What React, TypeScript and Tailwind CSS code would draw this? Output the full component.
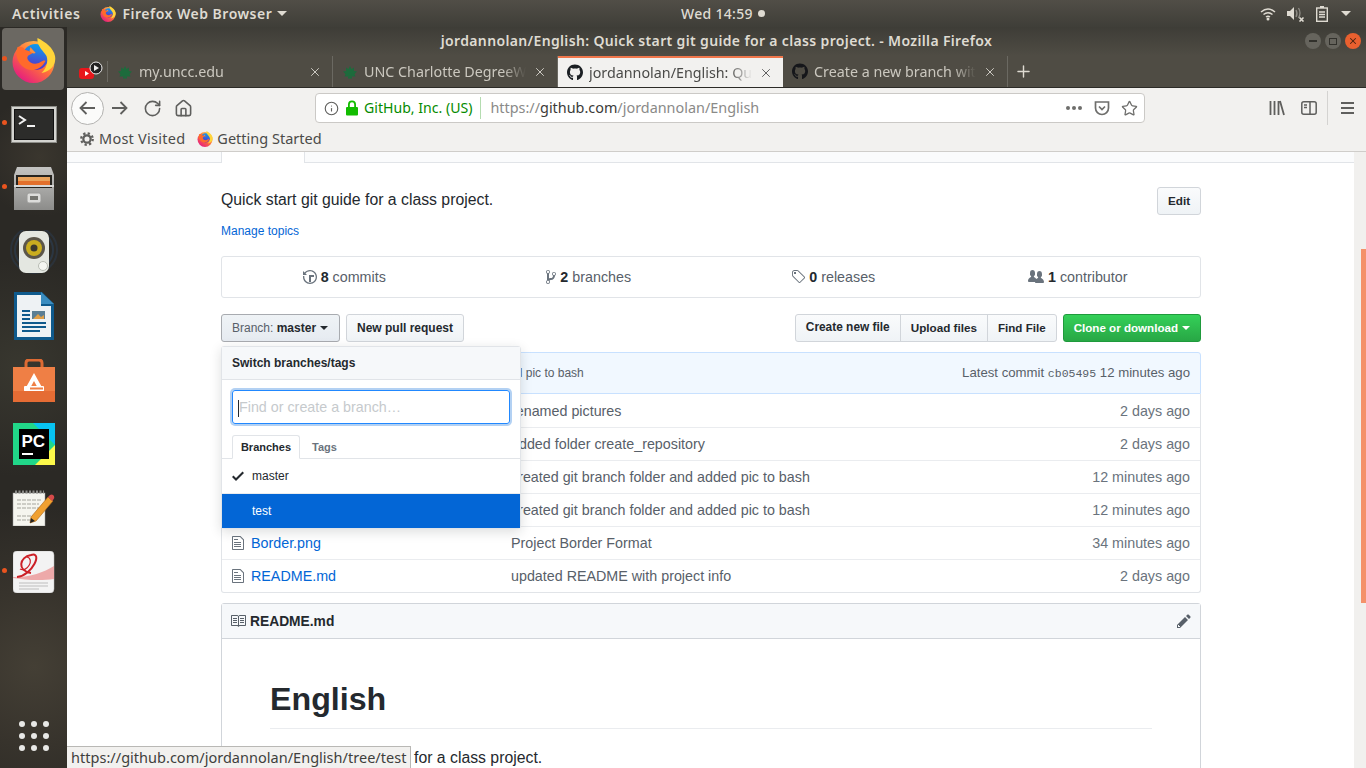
import { Home, Info, RotateCw, Star, Plus, X } from "lucide-react";
import { FaGithub } from "react-icons/fa";

const uiFont = "font-['Noto_Sans',sans-serif]";

const Octicon = ({ d, w, className }: { d: string; w: number; className?: string }) => (
  <svg viewBox={`0 0 ${w} 16`} width={w} height={16} fill="currentColor" className={className}>
    <path fillRule="evenodd" d={d} />
  </svg>
);

const icons = {
  history:
    "M8 13H6V6h5v2H8v5zM7 1C4.81 1 2.87 2.02 1.59 3.59L0 2v4h4L2.5 4.5C3.55 3.17 5.17 2.3 7 2.3c3.14 0 5.7 2.56 5.7 5.7s-2.56 5.7-5.7 5.7A5.71 5.71 0 0 1 1.3 8c0-.34.03-.67.09-1H.08C.03 7.33 0 7.66 0 8c0 3.86 3.14 7 7 7s7-3.14 7-7-3.14-7-7-7z",
  branch:
    "M10 5c0-1.11-.89-2-2-2a1.993 1.993 0 0 0-1 3.72v.3c-.02.52-.23.98-.63 1.38-.4.4-.86.61-1.38.63-.83.02-1.48.16-2 .45V4.72a1.993 1.993 0 0 0-1-3.72C.88 1 0 1.89 0 3a2 2 0 0 0 1 1.72v6.56c-.59.35-1 .99-1 1.72 0 1.11.89 2 2 2 1.11 0 2-.89 2-2 0-.53-.2-1-.53-1.36.09-.06.48-.41.59-.47.25-.11.56-.17.94-.17 1.05-.05 1.95-.45 2.75-1.25S8.95 7.77 9 6.73h-.02C9.59 6.37 10 5.73 10 5zM2 1.8c.66 0 1.2.55 1.2 1.2 0 .65-.55 1.2-1.2 1.2C1.35 4.2.8 3.65.8 3c0-.65.55-1.2 1.2-1.2zm0 12.41c-.66 0-1.2-.55-1.2-1.2 0-.65.55-1.2 1.2-1.2.65 0 1.2.55 1.2 1.2 0 .65-.55 1.2-1.2 1.2zm6-8c-.66 0-1.2-.55-1.2-1.2 0-.65.55-1.2 1.2-1.2.65 0 1.2.55 1.2 1.2 0 .65-.55 1.2-1.2 1.2z",
  tag: "M7.73 1.73C7.26 1.26 6.62 1 5.96 1H3.5C2.13 1 1 2.13 1 3.5v2.47c0 .66.27 1.3.73 1.77l6.06 6.06c.39.39 1.02.39 1.41 0l4.59-4.59a.996.996 0 0 0 0-1.41L7.73 1.73zM2.38 7.09c-.31-.3-.47-.7-.47-1.13V3.5c0-.88.72-1.59 1.59-1.59h2.47c.42 0 .83.16 1.13.47l6.14 6.13-4.73 4.73-6.13-6.15zM3.01 3h2v2H3V3h.01z",
  people:
    "M16 12.999c0 .439-.45 1-1 1H7.995c-.539 0-.994-.447-.995-.999H1c-.54 0-1-.561-1-1 0-2.634 3-4 3-4s.229-.409 0-1c-.841-.621-1.058-.59-1-3 .058-2.419 1.367-3 2.5-3s2.442.58 2.5 3c.058 2.41-.159 2.379-1 3-.229.59 0 1 0 1s1.549.711 2.42 2.088C9.196 9.369 10 8.999 10 8.999s.229-.409 0-1c-.841-.62-1.058-.59-1-3 .058-2.419 1.367-3 2.5-3s2.437.581 2.495 3c.059 2.41-.158 2.38-1 3-.229.59 0 1 0 1s3.005 1.366 3.005 4z",
  file: "M6 5H2V4h4v1zM2 8h7V7H2v1zm0 2h7V9H2v1zm0 2h7v-1H2v1zm10-7.5V14c0 .55-.45 1-1 1H1c-.55 0-1-.45-1-1V2c0-.55.45-1 1-1h7.5L12 4.5zM11 5L8 2H1v12h10V5z",
  book: "M3 5h4v1H3V5zm0 3h4V7H3v1zm0 2h4V9H3v1zm11-5h-4v1h4V5zm0 2h-4v1h4V7zm0 2h-4v1h4V9zm2-6v9c0 .55-.45 1-1 1H9.5l-1 1-1-1H2c-.55 0-1-.45-1-1V3c0-.55.45-1 1-1h5.5l1 1 1-1H15c.55 0 1 .45 1 1zm-8 .5L7.5 3H2v9h6V3.5zm7-.5H9.5l-.5.5V12h6V3z",
  pencil:
    "M0 12v3h3l8-8-3-3-8 8zm3 2H1v-2h1v1h1v1zm10.3-9.3L12 6 9 3l1.3-1.3a.996.996 0 0 1 1.41 0l1.59 1.59c.39.39.39 1.02 0 1.41z",
  check: "M12 5l-8 8-4-4 1.5-1.5L4 10l6.5-6.5L12 5z",
};

const FirefoxLogo = ({ size }: { size: number }) => (
  <svg viewBox="0 0 44 45" width={size} height={size}>
    <defs>
      <linearGradient id="ffBody" x1="0.8" y1="0.1" x2="0.15" y2="0.95">
        <stop offset="0" stopColor="#ffbd4f" />
        <stop offset="0.45" stopColor="#ff7139" />
        <stop offset="1" stopColor="#e31587" />
      </linearGradient>
      <linearGradient id="ffGlobe" x1="0.6" y1="0" x2="0.4" y2="1">
        <stop offset="0" stopColor="#0a9ff0" />
        <stop offset="0.55" stopColor="#3a5fd8" />
        <stop offset="1" stopColor="#592acb" />
      </linearGradient>
    </defs>
    <circle cx="22" cy="24" r="21" fill="url(#ffBody)" />
    <circle cx="24" cy="19" r="13" fill="url(#ffGlobe)" />
    <path d="M26 0C25 8 32 13 35 18C37 24 35 30 30 35C40 33 45 26 43.5 18C42 10 34 4 26 0Z" fill="#ffd43a" />
    <path d="M6 9C9 8 12 9 14 12C16 13 20 13 21 15C19 17 15 17 16 21C18 26 25 27 29 24C31 23 33 22 34 23C30 31 22 34 15 31C7 27 3 18 6 9Z" fill="#ff6a2b" />
    <path d="M19 9C21 12 24 14 24 15C22 16 20 15 18 13Z" fill="#ff8f3a" />
  </svg>
);

const TerminalIcon = () => (
  <svg viewBox="0 0 46 37" width={46} height={37}>
    <rect x="0.5" y="0.5" width="45" height="36" fill="#d4d4d0" stroke="#8d8d88" />
    <rect x="3.5" y="3.5" width="39" height="30" fill="#2c2c2a" stroke="#111" />
    <path d="M8 10l6 4-6 4" fill="none" stroke="#f2f2f2" strokeWidth="2" />
    <rect x="16" y="19" width="8" height="2" fill="#f2f2f2" />
  </svg>
);

const FilesIcon = () => (
  <svg viewBox="0 0 42 43" width={42} height={43}>
    <defs>
      <linearGradient id="cab" x1="0" y1="0" x2="0" y2="1">
        <stop offset="0" stopColor="#c4c4c2" />
        <stop offset="1" stopColor="#8c8c8a" />
      </linearGradient>
    </defs>
    <path d="M4 0h34l3 8v35H1V8z" fill="url(#cab)" />
    <rect x="3" y="8" width="36" height="13" fill="#26241f" />
    <rect x="5" y="10" width="32" height="8" fill="#e9a35d" />
    <rect x="5" y="14" width="32" height="4" fill="#e2702c" />
    <rect x="1" y="18" width="40" height="2" fill="#d8d8d6" />
    <rect x="14" y="26" width="14" height="10" rx="2" fill="#dcdcda" stroke="#9a9a98" />
    <rect x="17" y="29" width="8" height="4" fill="#74746f" />
  </svg>
);

const SpeakerIcon = () => (
  <svg viewBox="0 0 48 44" width={48} height={44}>
    <circle cx="24" cy="20" r="23" fill="none" stroke="#2c4a6e" strokeWidth="2" opacity="0.3" />
    <circle cx="24" cy="20" r="19" fill="none" stroke="#2c4a6e" strokeWidth="2" opacity="0.4" />
    <rect x="9" y="1" width="30" height="42" rx="7" fill="#e4e7e1" />
    <circle cx="24" cy="18" r="11" fill="#5b564a" />
    <circle cx="24" cy="18" r="8" fill="#c9ad1f" />
    <circle cx="24" cy="18" r="3.5" fill="#3c3a2c" />
    <circle cx="33" cy="36" r="4.5" fill="#f4f6f2" stroke="#b8bcb4" />
  </svg>
);

const WriterIcon = () => (
  <svg viewBox="0 0 40 48" width={40} height={48}>
    <path d="M0 0h28l12 12v36H0z" fill="#0f5a8c" />
    <path d="M3 3h24v11h10v31H3z" fill="#eef2f4" />
    <path d="M27 0l13 12H27z" fill="#3b8dc0" />
    <rect x="18" y="19" width="13" height="8" fill="#5b7f94" />
    <path d="M19 27l5-5 3 3 3-2v4z" fill="#e0a048" />
    <path d="M8 18h8v2H8zM8 22h8v2H8zM8 26h8v2H8zM8 30h24v2H8zM8 34h24v2H8zM8 38h18v2H8z" fill="#0f5a8c" />
  </svg>
);

const BagIcon = () => (
  <svg viewBox="0 0 42 43" width={42} height={43}>
    <path d="M13 12V4q0-3 3-3h10q3 0 3 3v8" fill="none" stroke="#dd6a33" strokeWidth="3" />
    <path d="M0 8h42v35H0z" fill="#ef7f45" />
    <path d="M0 32h42v11H0z" fill="#e56c34" />
    <path d="M21 14l10 18h-4.5l-5.5-10-5.5 10H11z" fill="#fff" />
    <rect x="11" y="27" width="20" height="5" rx="1" fill="#fff" />
    <rect x="17" y="28.5" width="13" height="2" fill="#ef7f45" />
  </svg>
);

const PyCharmIcon = () => (
  <svg viewBox="0 0 42 42" width={42} height={42}>
    <rect width="42" height="42" fill="#21d789" />
    <path d="M20 0h22v22z" fill="#07c3f2" />
    <path d="M22 42l20-20v20z" fill="#fcf84a" />
    <rect x="6" y="6" width="30" height="30" fill="#000" />
    <rect x="9" y="30" width="11" height="2" fill="#fff" />
    <text x="8.5" y="24" fill="#fff" fontSize="17" fontWeight="700" fontFamily="Liberation Sans, sans-serif">PC</text>
  </svg>
);

const NotesIcon = () => (
  <svg viewBox="0 0 44 36" width={44} height={36}>
    <rect x="1" y="3" width="32" height="33" fill="#f5f5ef" stroke="#999" strokeWidth="0.5" />
    <path d="M3 2h29" stroke="#8b8b88" strokeWidth="3" strokeDasharray="2 1.5" />
    <path d="M5 10h24M5 14h22M5 18h24M5 26h18M5 30h14" stroke="#a5a59d" strokeWidth="1" strokeDasharray="4 1" />
    <path d="M19 27L36 7l5 4-17 20-6 2z" fill="#f0a030" stroke="#a9641a" strokeWidth="0.6" />
    <path d="M36 7l2-2q2-1 3 0l1 1q1 2-1 4l-1 1z" fill="#d64a4a" />
    <path d="M18 33l1-5 4 3z" fill="#222" />
  </svg>
);

const EvinceIcon = () => (
  <svg viewBox="0 0 42 42" width={42} height={42}>
    <rect width="41" height="42" rx="4" fill="#f3f3f3" stroke="#bbb" strokeWidth="0.5" />
    <path d="M0 26C14 27 30 22 41 15V28C28 30 12 29 0 27z" fill="#eda9a9" />
    <path d="M4 26C20 24 30 0 18 4C6 6 4 20 18 22" fill="none" stroke="#cc2027" strokeWidth="2" />
    <path d="M7 18C14 22 22 8 14 6" fill="none" stroke="#cc2027" strokeWidth="1.2" />
    <path d="M6 32h29M6 35h29M6 38h20" stroke="#bdbdbd" strokeWidth="1" />
  </svg>
);

const UnccIcon = () => (
  <svg viewBox="0 0 16 16" width={16} height={16} fill="#1d6b3c">
    <path d="M8 2l1.5 3L12 3.5 11.8 7 15 7.5 12.5 10l1 2.5H2.5l1-2.5L1 7.5 4.2 7 4 3.5 6.5 5z" />
    <rect x="6" y="12.5" width="4" height="2" />
  </svg>
);

const dockItems = [
  { key: "firefox", icon: <FirefoxLogo size={45} />, dot: true, active: true },
  { key: "terminal", icon: <TerminalIcon />, dot: true },
  { key: "files", icon: <FilesIcon />, dot: true },
  { key: "speaker", icon: <SpeakerIcon /> },
  { key: "writer", icon: <WriterIcon /> },
  { key: "bag", icon: <BagIcon /> },
  { key: "pycharm", icon: <PyCharmIcon /> },
  { key: "notes", icon: <NotesIcon /> },
  { key: "evince", icon: <EvinceIcon />, dot: true },
];

const Dock = () => (
  <div className="w-[67px] shrink-0 flex flex-col bg-[#2b2925] bg-[radial-gradient(circle_at_34px_640px,#443f35_0,#37332c_80px,transparent_160px),radial-gradient(circle_at_20px_340px,#38372f_0,transparent_110px),radial-gradient(circle_at_40px_130px,#3a362e_0,transparent_60px)] pt-px">
    {dockItems.map((item) => (
      <div key={item.key} className="relative h-16 flex items-center justify-center">
        {item.active && <div className="absolute left-[2px] right-[3px] top-0 h-[62px] rounded-[4px] bg-[#6b6862]" />}
        {item.dot && <div className="absolute left-[2px] top-[28px] w-[5px] h-[5px] rounded-full bg-[#e9541f]" />}
        <div className="relative flex">{item.icon}</div>
      </div>
    ))}
    <div className="mt-auto mb-[17px] mx-auto grid grid-cols-3 gap-x-[6px] gap-y-[6px]">
      {Array.from({ length: 9 }).map((_, i) => (
        <div key={i} className="w-[6px] h-[6px] rounded-full bg-[#e8e8e6]" />
      ))}
    </div>
  </div>
);

const TopBar = () => (
  <div className={`h-[27px] shrink-0 flex items-center relative bg-gradient-to-b from-[#514e47] to-[#3f3e38] text-[#dfdbd2] text-[14px] font-semibold ${uiFont}`}>
    <span className="ml-3 tracking-[0.6px]">Activities</span>
    <span className="ml-5 flex"><FirefoxLogo size={16} /></span>
    <span className="ml-[6px] tracking-[0.5px]">Firefox Web Browser</span>
    <span className="ml-[5px] w-0 h-0 border-x-[5px] border-x-transparent border-t-[5px] border-t-[#dfdbd2]" />
    <div className="absolute left-[681px] top-0 h-[27px] flex items-center gap-[5px] font-medium">
      <span className="tracking-[0.3px]">Wed 14:59</span>
      <span className="w-[7px] h-[7px] rounded-full bg-[#dfdbd2]" />
    </div>
    <div className="ml-auto flex items-center mr-[15px]">
      <svg viewBox="0 0 16 14" width={16} height={14} className="mr-[11px]" fill="none" stroke="#dfdbd2" strokeWidth="1.5">
        <path d="M1 5q7-6 14 0M3.5 7.5q4.5-3.5 9 0M6 10q2-1.5 4 0" />
        <circle cx="8" cy="12" r="1.5" fill="#dfdbd2" stroke="none" />
      </svg>
      <svg viewBox="0 0 18 16" width={18} height={16} className="mr-[11px]" fill="#dfdbd2">
        <path d="M0 5h3l4-4v13L3 10H0z" />
        <path d="M9 4q2 3.5 0 7M11.5 2q3 5 0 10" fill="none" stroke="#8f8d86" strokeWidth="1.3" />
        <path d="M12.5 11.5l4 4m0-4l-4 4" stroke="#dfdbd2" strokeWidth="1.6" />
      </svg>
      <svg viewBox="0 0 12 16" width={12} height={16} className="mr-[13px]" fill="none" stroke="#dfdbd2" strokeWidth="1.4">
        <rect x="0.7" y="2" width="10.6" height="13.3" />
        <rect x="4" y="0" width="4" height="2" fill="#dfdbd2" stroke="none" />
        <path d="M3 6h6M3 8.5h6M3 11h6" />
      </svg>
      <span className="w-0 h-0 border-x-[5px] border-x-transparent border-t-[5px] border-t-[#dfdbd2]" />
    </div>
  </div>
);

const WinButton = ({ className, children }: { className: string; children: React.ReactNode }) => (
  <div className={`w-4 h-4 rounded-full flex items-center justify-center ${className}`}>{children}</div>
);

const TitleBar = () => (
  <div className={`h-[29px] shrink-0 relative flex items-center justify-center pb-[2px] bg-gradient-to-b from-[#3e3d37] to-[#4f4c44] text-[#dfdbd2] text-[14px] font-semibold ${uiFont}`}>
    <span className="tracking-[0.35px]">jordannolan/English: Quick start git guide for a class project. - Mozilla Firefox</span>
    <div className="absolute right-[5px] top-[6px] flex gap-1">
      <WinButton className="bg-[#66645d]"><span className="w-2 h-[1.5px] bg-[#32312c]" /></WinButton>
      <WinButton className="bg-[#66645d]"><span className="w-2 h-[7px] border border-[#32312c]" /></WinButton>
      <WinButton className="bg-[#e9602f]"><X size={10} strokeWidth={2.5} className="text-[#4a2310]" /></WinButton>
    </div>
  </div>
);

const Tab = ({ title, icon, active }: { title: string; icon: React.ReactNode; active?: boolean }) => (
  <div className={`w-[225px] h-full pl-[9px] flex items-center shrink-0 ${active ? "bg-[#f2f1ef] border-t-2 border-[#f0764b] text-[#4a4a48]" : "text-[#cbc8bf] border-r border-[#6b6962]"}`}>
    <span className="flex w-4 justify-center shrink-0">{icon}</span>
    <span className="ml-[6px] flex-1 min-w-0 overflow-hidden whitespace-nowrap text-[14.3px] [mask-image:linear-gradient(to_right,black_86%,transparent)]">{title}</span>
    <X size={14} strokeWidth={1.6} className={`ml-[7px] mr-[10px] shrink-0 ${active ? "text-[#555]" : "text-[#d5d3cb]"}`} />
  </div>
);

const TabStrip = () => (
  <div className={`h-[32px] shrink-0 flex items-stretch bg-[#4f4c44] border-b border-[#2c2b27] ${uiFont}`}>
    <div className="w-[41px] relative border-r border-[#6b6962] my-[5px] shrink-0">
      <svg viewBox="0 0 28 20" width={28} height={20} className="absolute left-[11px] top-0">
        <rect x="1" y="7" width="15" height="11" rx="3" fill="#e8161b" />
        <path d="M7 10l4 2.5L7 15z" fill="#fff" />
        <circle cx="18" cy="7" r="6" fill="#222" stroke="#eee" strokeWidth="1" />
        <path d="M16 4l5 3-5 3z" fill="#eee" />
      </svg>
    </div>
    <Tab title="my.uncc.edu" icon={<UnccIcon />} />
    <Tab title="UNC Charlotte DegreeWo" icon={<UnccIcon />} />
    <Tab active title="jordannolan/English: Qui" icon={<FaGithub size={17} className="text-[#1b1f23]" />} />
    <Tab title="Create a new branch with" icon={<FaGithub size={17} className="text-[#15161a]" />} />
    <Plus size={19} strokeWidth={1.8} className="ml-[6px] self-center text-[#dfdbd2]" />
  </div>
);

const NavBar = () => (
  <div className={`h-[39px] shrink-0 pt-px flex items-center bg-[#f2f1ef] text-[#5f5f5d] ${uiFont}`}>
    <div className="ml-1 w-[33px] h-[33px] rounded-full bg-[#fbfbfa] border border-[#b3b2b0] flex items-center justify-center">
      <svg viewBox="0 0 16 14" width={16} height={14} fill="none" stroke="currentColor" strokeWidth="1.8" className="-ml-px">
        <path d="M1.5 7H16M7.5 1L1.5 7l6 6" />
      </svg>
    </div>
    <svg viewBox="0 0 16 14" width={16} height={14} fill="none" stroke="currentColor" strokeWidth="1.8" className="ml-[8px]">
      <path d="M0 7h14.5M8.5 1l6 6-6 6" />
    </svg>
    <RotateCw size={19} strokeWidth={2} className="ml-[15px]" />
    <Home size={19} strokeWidth={2} className="ml-[12px]" />
    <div className="ml-[122px] w-[830px] h-[30px] rounded-[4px] bg-white border border-[#cbc9c6] flex items-center">
      <Info size={15} strokeWidth={1.8} className="ml-2" />
      <svg viewBox="0 0 14 16" width={14} height={16} className="ml-[6px]" fill="#12bc00">
        <path d="M3 7V4.5a4 4 0 0 1 8 0V7H9.2V4.5a2.2 2.2 0 0 0-4.4 0V7z" />
        <rect x="1" y="7" width="12" height="8.5" rx="1" />
      </svg>
      <span className="ml-[5px] text-[#058b00] text-[14.1px]">GitHub, Inc. (US)</span>
      <span className="ml-2 h-[22px] w-px bg-[#b4dcb0]" />
      <span className="ml-[9px] text-[#8a8a88] text-[14.4px]">
        https://<span className="text-[#3b3b39]">github.com</span>/jordannolan/English
      </span>
      <div className="ml-auto flex items-center text-[#6e6e6c]">
        <span className="flex gap-[2px]">
          <i className="w-[4px] h-[4px] rounded-full bg-[#6e6e6c]" />
          <i className="w-[4px] h-[4px] rounded-full bg-[#6e6e6c]" />
          <i className="w-[4px] h-[4px] rounded-full bg-[#6e6e6c]" />
        </span>
        <svg viewBox="0 0 16 15" width={16} height={15} fill="none" stroke="currentColor" strokeWidth="1.7" className="ml-[12px]">
          <path d="M1.5 1h13v6a6.5 6.5 0 0 1-13 0z" />
          <path d="M5 5.5L8 8.5l3-3" />
        </svg>
        <Star size={17} strokeWidth={1.8} className="ml-[11px] mr-[6px]" />
      </div>
    </div>
    <div className="ml-auto flex items-center">
      <svg viewBox="0 0 16 16" width={16} height={16} fill="none" stroke="currentColor" strokeWidth="1.8">
        <path d="M1.5 1v14M5.5 1v14M9.5 1v14M11 1l4 14" />
      </svg>
      <svg viewBox="0 0 16 14" width={16} height={14} fill="none" stroke="currentColor" strokeWidth="1.5" className="ml-4">
        <rect x="0.8" y="0.8" width="14.4" height="12.4" rx="2" />
        <path d="M9 1v12M3 4h3M3 6.5h3" />
      </svg>
      <span className="ml-[10px] h-[34px] w-px bg-[#d4d3d1]" />
      <div className="ml-[13px] mr-[12px] flex flex-col gap-[3px]">
        <i className="w-[13px] h-[2px] bg-[#5f5f5d]" />
        <i className="w-[13px] h-[2px] bg-[#5f5f5d]" />
        <i className="w-[13px] h-[2px] bg-[#5f5f5d]" />
      </div>
    </div>
  </div>
);

const BookmarksBar = () => (
  <div className={`h-[25px] shrink-0 flex items-center bg-[#f2f1ef] border-b border-[#cfcdca] text-[#4b4b49] text-[14.5px] ${uiFont}`}>
    <svg viewBox="0 0 16 16" width={14} height={14} className="ml-[13px]" fill="none" stroke="#5f5f5d">
      <circle cx="8" cy="8" r="4.2" strokeWidth="2.6" />
      <circle cx="8" cy="8" r="6.6" strokeWidth="2.6" strokeDasharray="2.6 2.58" />
    </svg>
    <span className="ml-[5px] tracking-[0.25px]">Most Visited</span>
    <span className="ml-[12px] flex"><FirefoxLogo size={16} /></span>
    <span className="ml-[4px]">Getting Started</span>
  </div>
);

const Stat = ({ icon, w, n, label }: { icon: string; w: number; n: string; label: string }) => (
  <div className="flex-1 flex items-center justify-center text-[#586069]">
    <Octicon d={icon} w={w} className="text-[#6a737d] mr-1" />
    <span className="font-bold text-[#24292e] pt-px">{n}</span>
    <span className="ml-1 pt-px">{label}</span>
  </div>
);

const btn = "h-[28px] px-[10px] flex items-center font-bold text-[#24292e] border border-[#d1d5da] bg-gradient-to-b from-[#fafbfc] to-[#eff3f6]";

const files = [
  { name: "", msg: "renamed pictures", age: "2 days ago" },
  { name: "", msg: "added folder create_repository", age: "2 days ago" },
  { name: "", msg: "created git branch folder and added pic to bash", age: "12 minutes ago" },
  { name: "", msg: "created git branch folder and added pic to bash", age: "12 minutes ago" },
  { name: "Border.png", msg: "Project Border Format", age: "34 minutes ago" },
  { name: "README.md", msg: "updated README with project info", age: "2 days ago" },
];

const BranchMenu = () => (
  <div className="absolute left-0 top-[32px] z-10 w-[300px] bg-white border border-[#e1e4e8] rounded-[3px] shadow-[0_3px_12px_rgba(27,31,35,0.15)]">
    <div className="h-[33px] flex items-center px-[10px] bg-[#f6f8fa] border-b border-[#e1e4e8] text-[12px] font-bold text-[#24292e]">Switch branches/tags</div>
    <div className="px-[10px] pt-[10px]">
      <div className="h-[34px] flex items-center rounded-[3px] border border-[#2188ff] shadow-[0_0_0_2px_rgba(3,102,214,0.3)] pl-[5px] pt-[2px] text-[#c6cacd]">
        <span className="w-px h-[17px] bg-[#24292e]" />
        Find or create a branch…
      </div>
    </div>
    <div className="mt-[11px] pl-[10px] flex border-b border-[#e1e4e8] text-[11px] font-bold h-[24px]">
      <span className="w-[68px] h-[24px] flex items-center justify-center bg-white border border-[#e1e4e8] border-b-white rounded-t-[3px] text-[#24292e]">Branches</span>
      <span className="ml-[12px] pt-px flex items-center text-[#6a737d]">Tags</span>
    </div>
    <div className="h-[35px] flex items-center border-b border-[#eaecef] text-[12px] text-[#24292e]">
      <Octicon d={icons.check} w={12} className="ml-[10px]" />
      <span className="ml-[8px]">master</span>
    </div>
    <div className="h-[34px] flex items-center bg-[#0366d6] pl-[30px] text-[12px] text-white">test</div>
  </div>
);

const Page = () => (
  <div className="flex-1 min-w-0 flex bg-white overflow-hidden relative">
    <div className="flex-1 min-w-0 overflow-hidden font-['Liberation_Sans',sans-serif] text-[14.3px] text-[#24292e]">
      <div className="h-[11px] bg-[#fafbfc] border-b border-[#e1e4e8] pl-[154px]">
        <div className="w-[84px] h-[11px] bg-white border-x border-[#e1e4e8]" />
      </div>
      <div className="w-[980px] ml-[154px]">
        <div className="pt-[24px] flex justify-between">
          <span className="text-[15.8px] leading-[26px]">Quick start git guide for a class project.</span>
          <span className={`${btn} text-[11.7px] rounded-[3px] w-[44px] !px-0 justify-center`}>Edit</span>
        </div>
        <div className="mt-[7px] text-[12px] leading-[18px] text-[#0366d6]">Manage topics</div>
        <div className="mt-[16px] h-[42px] border border-[#e1e4e8] rounded-[3px] flex">
          <Stat icon={icons.history} w={14} n="8" label="commits" />
          <Stat icon={icons.branch} w={10} n="2" label="branches" />
          <Stat icon={icons.tag} w={14} n="0" label="releases" />
          <Stat icon={icons.people} w={16} n="1" label="contributor" />
        </div>
        <div className="mt-[16px] flex relative">
          <span className="h-[28px] w-[119px] px-[10px] flex items-center whitespace-nowrap rounded-[3px] text-[12px] text-[#586069] border border-[#a8abb0] bg-gradient-to-b from-[#eff3f6] to-[#e6ebf1]">
            Branch:&nbsp;<b className="text-[#24292e]">master</b>
            <i className="ml-1 w-0 h-0 border-x-[4px] border-x-transparent border-t-[4px] border-t-[#24292e]" />
          </span>
          <span className={`${btn} text-[12px] rounded-[3px] ml-[6px]`}>New pull request</span>
          <span className={`${btn} text-[11.9px] rounded-l-[3px] ml-auto`}>Create new file</span>
          <span className={`${btn} text-[11.7px] -ml-px`}>Upload files</span>
          <span className={`${btn} text-[11.6px] -ml-px rounded-r-[3px]`}>Find File</span>
          <span className="h-[28px] ml-[6px] px-[10px] flex items-center rounded-[3px] text-[11.6px] font-bold text-white border border-[#1f9a3c] bg-gradient-to-b from-[#34d058] to-[#28a745]">
            Clone or download
            <i className="ml-1 w-0 h-0 border-x-[4px] border-x-transparent border-t-[4px] border-t-white" />
          </span>
          <BranchMenu />
        </div>
        <div className="mt-[10px] h-[42px] border border-[#c8e1ff] rounded-t-[3px] bg-[#f1f8ff] flex items-center text-[13.2px] text-[#586069]">
          <span className="ml-[267px] text-[12px]">added pic to bash</span>
          <span className="ml-auto mr-[10px]">
            Latest commit <span className="font-['Liberation_Mono',monospace] text-[11.5px]">cb05495</span> 12 minutes ago
          </span>
        </div>
        <div className="border-x border-b border-[#e1e4e8] rounded-b-[3px]">
          {files.map((f, i) => (
            <div key={i} className={`h-[33px] flex items-center text-[#586069] ${i > 0 ? "border-t border-[#eaecef]" : ""}`}>
              <span className="w-[29px] pl-[10px] flex shrink-0">
                {f.name && <Octicon d={icons.file} w={12} className="text-[#6a737d]" />}
              </span>
              <span className="w-[260px] shrink-0 pt-[2px] text-[#0366d6]">{f.name}</span>
              <span className="pt-[2px]">{f.msg}</span>
              <span className="ml-auto mr-[10px] pt-[2px] text-[#6a737d]">{f.age}</span>
            </div>
          ))}
        </div>
        <div className="mt-[10px] border border-[#d1d5da] rounded-t-[3px]">
          <div className="h-[35px] bg-[#f6f8fa] border-b border-[#d1d5da] flex items-center pl-[8px] pr-[9px] font-bold text-[13.8px]">
            <Octicon d={icons.book} w={16} className="text-[#586069] mr-1" />
            <span className="pt-[2px]">README.md</span>
            <Octicon d={icons.pencil} w={14} className="ml-auto text-[#586069]" />
          </div>
          <div className="px-[48px] pt-[40px] pb-[40px]">
            <h1 className="text-[32.2px] leading-[40px] font-bold pb-[9px] border-b border-[#eaecef]">English</h1>
            <p className="mt-[16px] text-[15.8px] leading-[26px]">Quick start git guide for a class project.</p>
          </div>
        </div>
      </div>
    </div>
    <div className="w-[12px] shrink-0 bg-[#f1f0ee]">
      <div className="mt-[97px] ml-auto w-[5px] h-[354px] bg-[#f4916a]" />
    </div>
    <div className={`absolute left-0 bottom-0 h-[22px] w-[344px] flex items-center pl-1 bg-[#f2f1ef] border-t border-r border-[#b9b8b5] text-[#3f3f3d] text-[14.5px] tracking-[0.02px] whitespace-nowrap ${uiFont}`}>
      https://github.com/jordannolan/English/tree/test
    </div>
  </div>
);

export default function App() {
  return (
    <div className="w-[1366px] h-[768px] flex flex-col overflow-hidden">
      <TopBar />
      <div className="flex-1 min-h-0 flex">
        <Dock />
        <div className="flex-1 min-w-0 flex flex-col">
          <TitleBar />
          <TabStrip />
          <NavBar />
          <BookmarksBar />
          <Page />
        </div>
      </div>
    </div>
  );
}
